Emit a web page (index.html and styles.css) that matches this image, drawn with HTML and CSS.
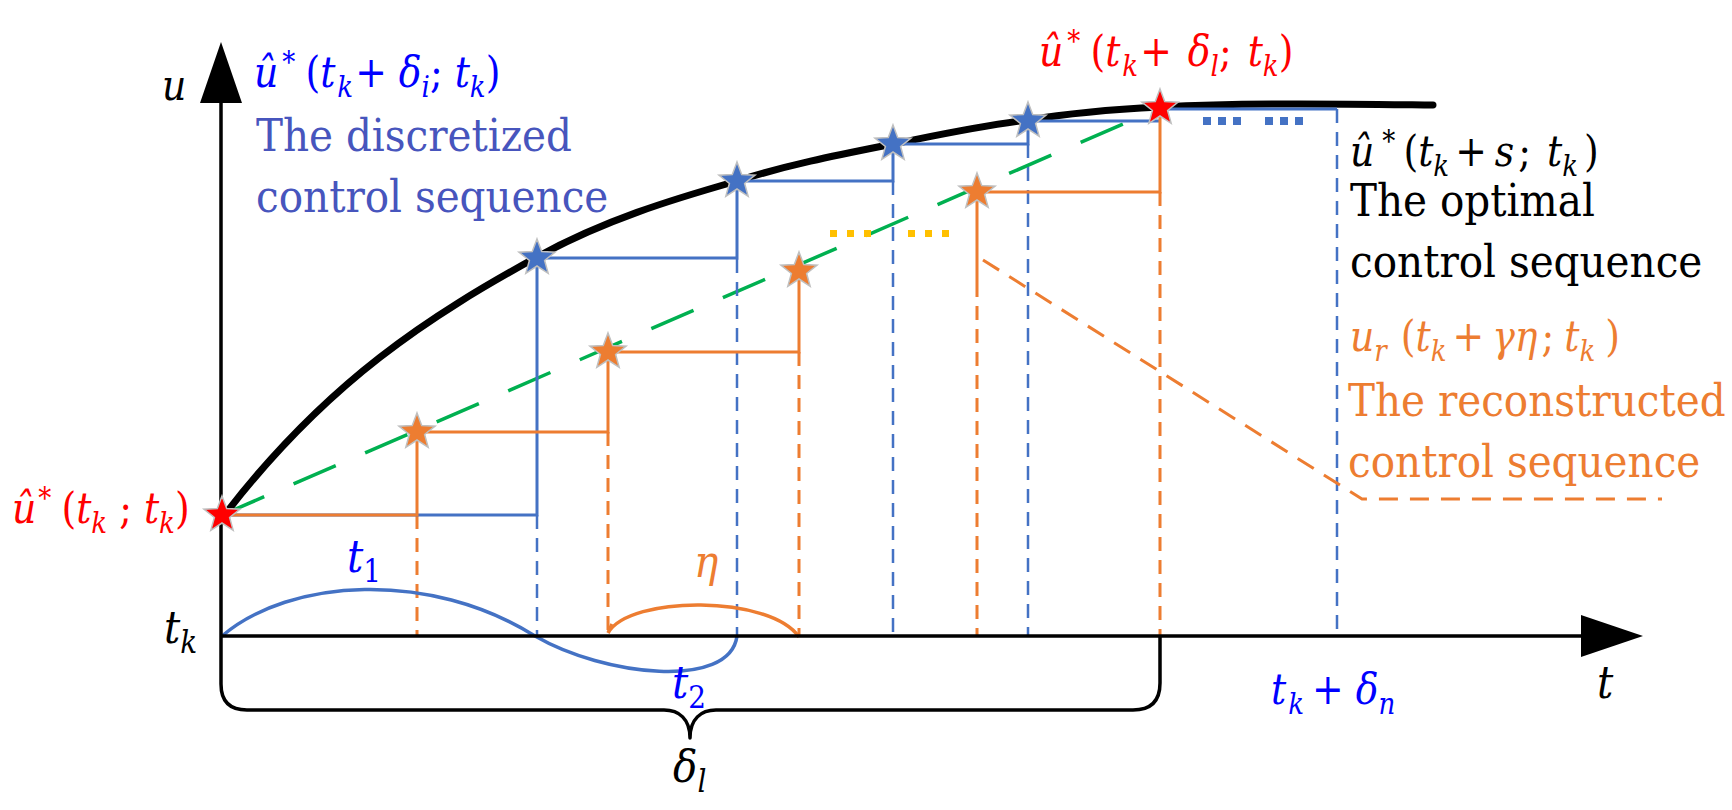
FILE: index.html
```html
<!DOCTYPE html>
<html lang="en">
<head>
<meta charset="utf-8">
<title>Control sequence reconstruction</title>
<link rel="stylesheet" href="styles.css">
</head>
<body>
<div class="figure">
<svg class="fig" width="1732" height="810" viewBox="0 0 1732 810" xmlns="http://www.w3.org/2000/svg">
  <defs>
    <polygon id="star" points="0,-19 4.7,-6.47 18.07,-5.87 7.61,2.47 11.17,15.37 0,8 -11.17,15.37 -7.61,2.47 -18.07,-5.87 -4.7,-6.47"/>
  </defs>
  <path class="gr" d="M222,515 L1160,108"/>
  <path class="curve" d="M223,517 C327.7,380 432.3,314.6 537,257 C603.7,220.3 670.3,200 737,181 C789,164.4 841,154.4 893,144 C937.7,135.1 982.3,125.3 1028,120 C1071.3,112.8 1115.7,109.2 1160,107 C1251,102.5 1342,104 1433,105"/>
  <path class="bld" d="M537,515 V636 M737,259 V636 M893,181 V636 M1028,144 V636 M1337,109 V636"/>
  <path class="ord" d="M417,515 V636 M608,432 V636 M799,352 V636 M977,283 V636 M1160,192 V636"/>
  <path class="ordl" d="M983,260 L1362,499 L1662,499"/>
  <path class="bl" d="M222,515 H537 V258 H737 V181 H893 V144 H1028 V121 H1160 M1160,109 H1337"/>
  <path class="or" d="M222,515 H417 V432 H608 V352 H799 V271 M977,283 V192 H1160 V108"/>
  <g class="dots-y">
    <rect x="830" y="230" width="7" height="7"/><rect x="847" y="230" width="7" height="7"/><rect x="864" y="230" width="7" height="7"/>
    <rect x="908" y="230" width="7" height="7"/><rect x="925" y="230" width="7" height="7"/><rect x="942" y="230" width="7" height="7"/>
  </g>
  <g class="dots-b">
    <rect x="1203" y="117" width="8" height="8"/><rect x="1218" y="117" width="8" height="8"/><rect x="1233" y="117" width="8" height="8"/>
    <rect x="1265" y="117" width="8" height="8"/><rect x="1280" y="117" width="8" height="8"/><rect x="1295" y="117" width="8" height="8"/>
  </g>
  <path class="arc-b" d="M222,636 C290,578 430,570 535,636 C604,676 730,690 737,636"/>
  <path class="arc-o" d="M608,633 C630,595 770,595 799,637 M608,633 L612,624"/>
  <path class="axis" d="M221,636 V100 M221,636 H1584"/>
  <polygon class="arrow" points="221,42 200,103 242,103"/>
  <polygon class="arrow" points="1643,636 1581,615 1581,657"/>
  <path class="brace" d="M221,636 V684 Q221,710 247,710 H664 C679,710 690,719 690,738 C690,719 701,710 716,710 H1133 Q1160,710 1160,683 V636"/>
  <use href="#star" class="st st-red" x="222" y="515"/>
  <use href="#star" class="st st-orange" x="417" y="432"/>
  <use href="#star" class="st st-orange" x="608" y="352"/>
  <use href="#star" class="st st-orange" x="799" y="271"/>
  <use href="#star" class="st st-orange" x="977" y="192"/>
  <use href="#star" class="st st-blue" x="537" y="258"/>
  <use href="#star" class="st st-blue" x="737" y="181"/>
  <use href="#star" class="st st-blue" x="893" y="144"/>
  <use href="#star" class="st st-blue" x="1028" y="121"/>
  <use href="#star" class="st st-red" x="1160" y="108"/>
</svg>

<div class="lbl fm c-black p-u"><i>u</i></div>
<div class="lbl lb c-black p-tk"><i>t</i><i class="lsub">k</i></div>
<div class="lbl lb c-black p-t"><i>t</i></div>

<div class="lbl fm c-blue p-fblue"><i>û</i><span class="sup ml4">*</span><span class="ml10">(</span><i>t</i><i class="sub ml2">k</i><span class="ml2">+</span><i class="ml12">δ</i><i class="sub">i</i>;<i class="ml12">t</i><i class="sub">k</i>)</div>
<div class="lbl tx c-slate p-tblue"><span class="ln">The discretized</span><span class="ln">control sequence</span></div>

<div class="lbl fm c-red p-fredtop"><i>û</i><span class="sup ml4">*</span><span class="ml10">(</span><i>t</i><i class="sub ml2">k</i><span class="ml2">+</span><i class="ml16">δ</i><i class="sub">l</i>;<i class="ml16">t</i><i class="sub">k</i>)</div>

<div class="lbl fm c-red p-fredleft"><i>û</i><span class="sup ml2">*</span><span class="ml10">(</span><i>t</i><i class="sub">k</i><span class="ml12">;</span><i class="ml12">t</i><i class="sub">k</i>)</div>

<div class="lbl fm c-black p-fblack"><i>û</i><span class="sup ml8">*</span><span class="ml8">(</span><i>t</i><i class="sub">k</i><span class="ml6">+</span><i class="ml8">s</i><span class="ml4">;</span><i class="ml16">t</i><i class="sub">k</i><span class="ml6">)</span></div>
<div class="lbl tx c-black p-tblack"><span class="ln">The optimal</span><span class="ln">control sequence</span></div>

<div class="lbl fm c-orange p-forange"><i>u</i><i class="sub">r</i><span class="ml14">(</span><i>t</i><i class="sub">k</i><span class="ml6">+</span><i class="ml8">γ</i><i>η</i><span class="ml4">;</span><i class="ml10">t</i><i class="sub">k</i><span class="ml10">)</span></div>
<div class="lbl tx c-orange p-torange"><span class="ln">The reconstructed</span><span class="ln">control sequence</span></div>

<div class="lbl lb c-blue p-t1"><i>t</i><span class="lsub">1</span></div>
<div class="lbl lb c-orange p-eta"><i>η</i></div>
<div class="lbl lb c-blue p-t2"><i>t</i><span class="lsub">2</span></div>
<div class="lbl lb c-black p-dl"><i>δ</i><i class="lsub">l</i></div>
<div class="lbl fm c-blue p-tkdn"><i>t</i><i class="sub ml2">k</i><span class="ml8">+</span><i class="ml12">δ</i><i class="sub">n</i></div>
</div>
</body>
</html>
```

FILE: styles.css
```css
html, body {
  margin: 0;
  padding: 0;
  background: #ffffff;
}

.figure {
  position: relative;
  width: 1732px;
  height: 810px;
  overflow: hidden;
  font-family: "DejaVu Serif Condensed", "DejaVu Serif", "Liberation Serif", serif;
  font-stretch: condensed;
}

.fig {
  display: block;
}

/* ---------- labels on the diagram canvas ---------- */
.lbl {
  position: absolute;
  white-space: nowrap;
  line-height: 1;
}

.lbl i {
  font-style: italic;
}

.fm { font-size: 42px; line-height: 36px; }
.lb { font-size: 45px; }

.tx {
  font-size: 45px;
  line-height: 40px;
}

.tx .ln {
  display: block;
}

.tx .ln + .ln {
  margin-top: 21px;
}

.sub {
  display: inline-block;
  font-size: 29px;
  line-height: 20px;
  vertical-align: -10px;
}

.lsub {
  display: inline-block;
  font-size: 31px;
  line-height: 20px;
  vertical-align: -10px;
}

.sup {
  font-size: 29px;
  line-height: 0;
  vertical-align: 15px;
}

.ml2 { margin-left: 2px; }
.ml4 { margin-left: 4px; }
.ml6 { margin-left: 6px; }
.ml8 { margin-left: 8px; }
.ml10 { margin-left: 10px; }
.ml12 { margin-left: 12px; }
.ml14 { margin-left: 14px; }
.ml16 { margin-left: 16px; }

.c-black { color: #000000; }
.c-blue { color: #0000ff; }
.c-slate { color: #4755bd; }
.c-red { color: #ff0000; }
.c-orange { color: #ed7d31; }

.p-u { left: 162px; top: 68px; }
.p-tk { left: 164px; top: 605px; }
.p-t { left: 1597px; top: 660px; }
.p-fblue { left: 254px; top: 55px; }
.p-tblue { left: 256px; top: 116px; }
.p-fredtop { left: 1039px; top: 34px; }
.p-fredleft { left: 12px; top: 491px; }
.p-fblack { left: 1350px; top: 134px; }
.p-tblack { left: 1350px; top: 181px; }
.p-forange { left: 1350px; top: 319px; }
.p-torange { left: 1348px; top: 381px; }
.p-t1 { left: 347px; top: 534px; }
.p-eta { left: 694px; top: 539px; }
.p-t2 { left: 672px; top: 660px; }
.p-dl { left: 673px; top: 744px; }
.p-tkdn { left: 1271px; top: 672px; }

/* ---------- drawing ---------- */
.axis { fill: none; stroke: #000000; stroke-width: 3.5; }
.arrow { fill: #000000; }
.curve { fill: none; stroke: #000000; stroke-width: 7; stroke-linecap: round; }
.gr { fill: none; stroke: #00b050; stroke-width: 3.5; stroke-dasharray: 46 32; }
.bl { fill: none; stroke: #4472c4; stroke-width: 3; }
.bld { fill: none; stroke: #4472c4; stroke-width: 2.5; stroke-dasharray: 14 9; }
.or { fill: none; stroke: #ed7d31; stroke-width: 3; }
.ord { fill: none; stroke: #ed7d31; stroke-width: 3; stroke-dasharray: 14 9; }
.ordl { fill: none; stroke: #ed7d31; stroke-width: 3; stroke-dasharray: 19 12; }
.dots-y rect { fill: #ffc000; }
.dots-b rect { fill: #4472c4; }
.arc-b { fill: none; stroke: #4472c4; stroke-width: 3.5; }
.arc-o { fill: none; stroke: #ed7d31; stroke-width: 3.5; }
.brace { fill: none; stroke: #000000; stroke-width: 3.5; stroke-linejoin: round; }
.st { stroke: #bfbfbf; stroke-width: 1.5; }
.st-red { fill: #ff0000; }
.st-blue { fill: #4472c4; }
.st-orange { fill: #ed7d31; }
```
